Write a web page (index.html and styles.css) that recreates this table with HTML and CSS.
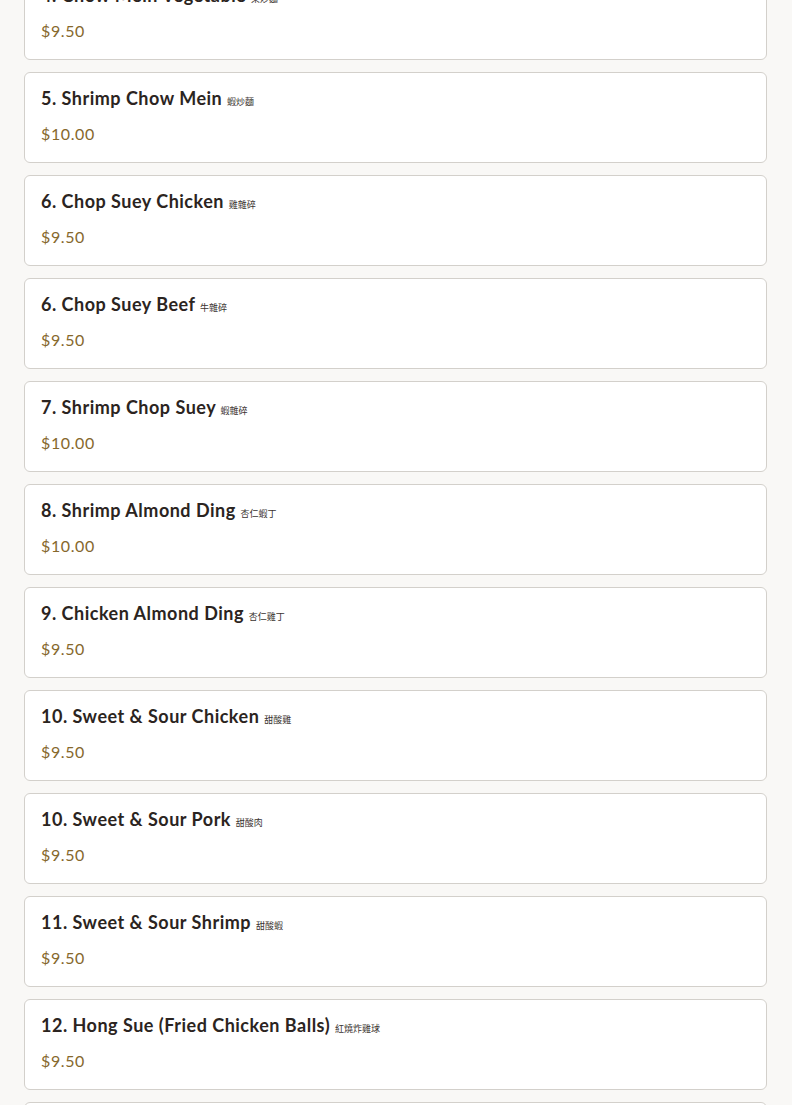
FILE: index.html
```html
<!DOCTYPE html>
<html lang="en">
<head>
    <meta charset="UTF-8">
    <meta name="viewport" content="width=device-width, initial-scale=1.0">
    <title>Menu - Chow Mein &amp; Chop Suey</title>
    <link rel="stylesheet" href="styles.css">
</head>
<body>

    <!-- Menu list (scrolled part of the section) -->
    <div class="menu-list">
        <div class="menu-item">
            <h3 class="item-name">4. Chow Mein Vegetable <span class="zh">菜炒麵</span></h3>
            <p class="item-price">$9.50</p>
        </div>
        <div class="menu-item">
            <h3 class="item-name">5. Shrimp Chow Mein <span class="zh">蝦炒麵</span></h3>
            <p class="item-price">$10.00</p>
        </div>
        <div class="menu-item">
            <h3 class="item-name">6. Chop Suey Chicken <span class="zh">雞雜碎</span></h3>
            <p class="item-price">$9.50</p>
        </div>
        <div class="menu-item">
            <h3 class="item-name">6. Chop Suey Beef <span class="zh">牛雜碎</span></h3>
            <p class="item-price">$9.50</p>
        </div>
        <div class="menu-item">
            <h3 class="item-name">7. Shrimp Chop Suey <span class="zh">蝦雜碎</span></h3>
            <p class="item-price">$10.00</p>
        </div>
        <div class="menu-item">
            <h3 class="item-name">8. Shrimp Almond Ding <span class="zh">杏仁蝦丁</span></h3>
            <p class="item-price">$10.00</p>
        </div>
        <div class="menu-item">
            <h3 class="item-name">9. Chicken Almond Ding <span class="zh">杏仁雞丁</span></h3>
            <p class="item-price">$9.50</p>
        </div>
        <div class="menu-item">
            <h3 class="item-name">10. Sweet &amp; Sour Chicken <span class="zh">甜酸雞</span></h3>
            <p class="item-price">$9.50</p>
        </div>
        <div class="menu-item">
            <h3 class="item-name">10. Sweet &amp; Sour Pork <span class="zh">甜酸肉</span></h3>
            <p class="item-price">$9.50</p>
        </div>
        <div class="menu-item">
            <h3 class="item-name">11. Sweet &amp; Sour Shrimp <span class="zh">甜酸蝦</span></h3>
            <p class="item-price">$9.50</p>
        </div>
        <div class="menu-item">
            <h3 class="item-name">12. Hong Sue (Fried Chicken Balls) <span class="zh">紅燒炸雞球</span></h3>
            <p class="item-price">$9.50</p>
        </div>
        <div class="menu-item"></div>
    </div>

</body>
</html>
```

FILE: styles.css
```css
body {
    font-family: Lato, "Open Sans", "Noto Sans CJK TC", sans-serif;
    background-color: #f9f8f6;
    margin: 0;
}
.menu-list {
    display: flex;
    flex-direction: column;
    gap: 12px;
    padding: 0 25px 0 24px;
    margin-top: -31px;
}
.menu-item {
    background-color: #fff;
    border: 1px solid #d3d0cb;
    border-radius: 6px;
    padding: 14px 16px;
    height: 91px;
    box-sizing: border-box;
}
.item-name {
    margin: 0;
    font-size: 18px;
    line-height: 22px;
    font-weight: 700;
    letter-spacing: 0.5px;
    color: #2b2421;
}
.zh {
    font-size: 9px;
    font-weight: 400;
    letter-spacing: 0;
    color: #3a3330;
}
.item-price {
    margin: 9px 0 0;
    font-size: 16px;
    line-height: 24px;
    letter-spacing: 0.6px;
    color: #86682c;
}
```
